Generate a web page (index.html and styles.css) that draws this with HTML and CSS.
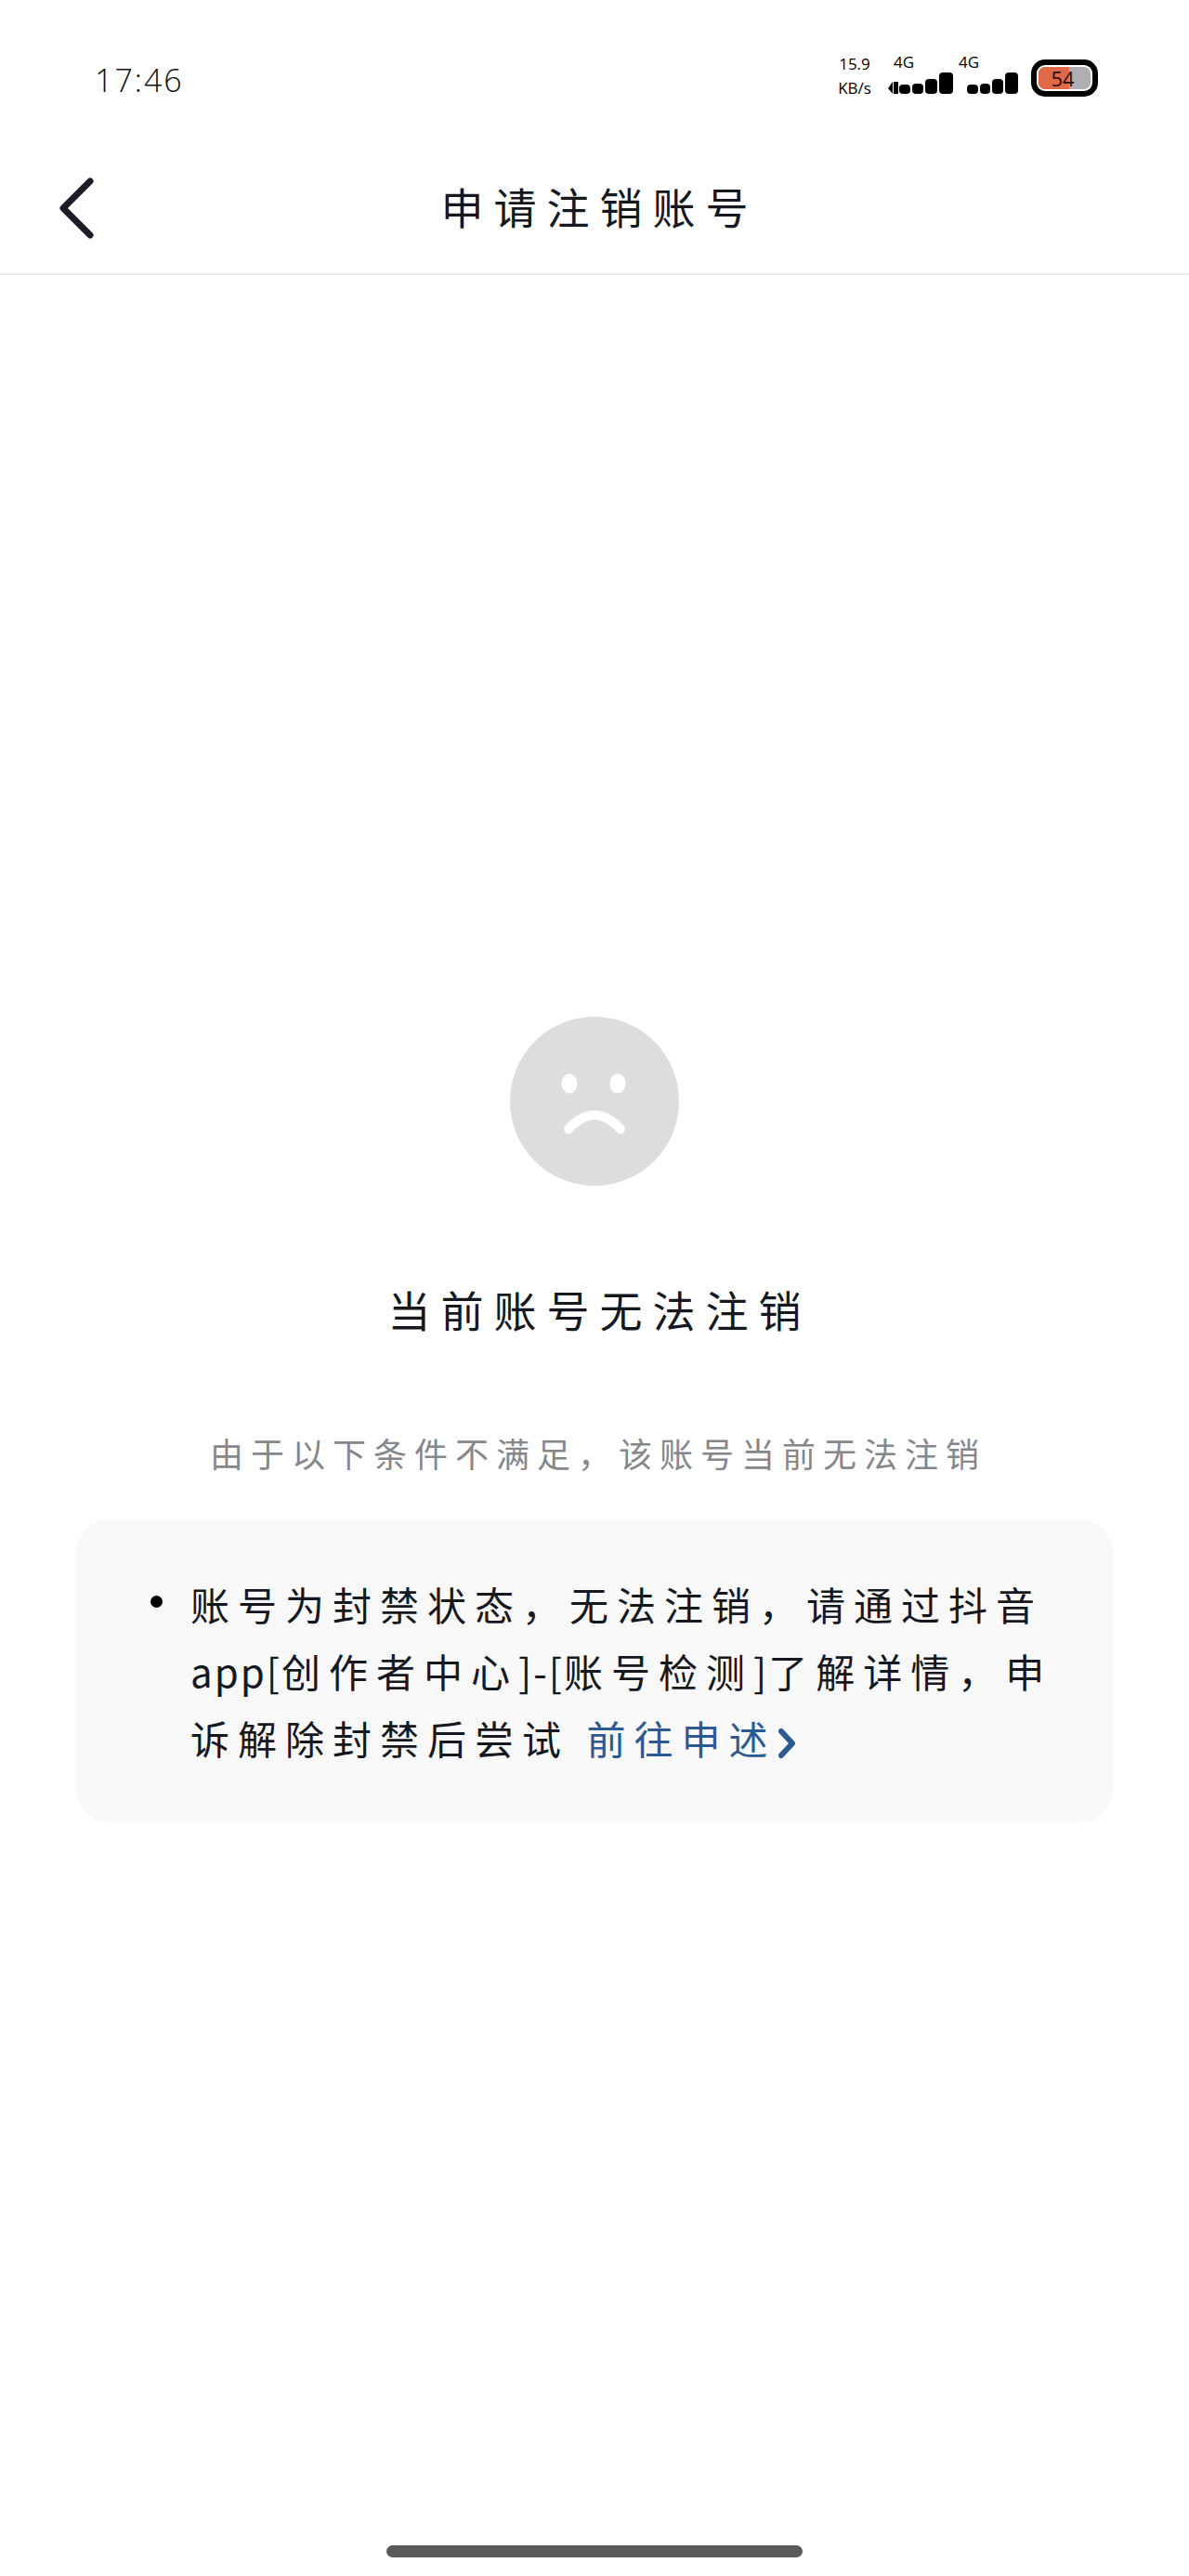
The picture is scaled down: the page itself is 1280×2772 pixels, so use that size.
FILE: index.html
```html
<!DOCTYPE html>
<html lang="zh-CN">
<head>
<meta charset="utf-8">
<title>申请注销账号</title>
<link rel="stylesheet" href="styles.css">
</head>
<body>
<div class="page">
  <header class="status">
    <span class="time">17:46</span>
    <div class="indicators">
      <div class="speed"><span>15.9</span><span>KB/s</span></div>
      <div class="sim sim-first">
        <span class="gen">4G</span>
        <svg class="bars bars-first" viewBox="0 0 72 26" aria-hidden="true">
          <path d="M0 19l5-7v13zM6 12h5v13H6z" fill="#000"/>
          <rect x="12" y="15" width="12" height="10" rx="4" fill="#000"/>
          <rect x="26" y="14" width="12" height="11" rx="4" fill="#000"/>
          <rect x="40" y="9" width="13" height="16" rx="4" fill="#000"/>
          <rect x="55" y="2" width="15" height="23" rx="4" fill="#000"/>
        </svg>
      </div>
      <div class="sim sim-second">
        <span class="gen gen-second">4G</span>
        <svg class="bars bars-second" viewBox="0 0 56 26" aria-hidden="true">
          <rect x="0" y="15" width="12" height="10" rx="4" fill="#000"/>
          <rect x="14" y="14" width="11" height="11" rx="4" fill="#000"/>
          <rect x="27" y="9" width="12" height="16" rx="4" fill="#000"/>
          <rect x="41" y="2" width="14" height="23" rx="4" fill="#000"/>
        </svg>
      </div>
      <div class="battery"><div class="battery-level"><span class="battery-fill"></span><span class="battery-text">54</span></div></div>
    </div>
  </header>

  <nav class="nav">
    <svg class="back" viewBox="0 0 40 66" aria-hidden="true">
      <path d="M35 4L6 33l29 29" fill="none" stroke="#1b1c26" stroke-width="7" stroke-linecap="round" stroke-linejoin="round"/>
    </svg>
    <h1 class="nav-title">申请注销账号</h1>
  </nav>

  <main class="content">
    <svg class="face" viewBox="0 0 182 182" aria-hidden="true">
      <circle cx="91" cy="91" r="91" fill="#dcddde"/>
      <ellipse cx="64" cy="72" rx="8.5" ry="10.5" fill="#fff"/>
      <ellipse cx="116" cy="72" rx="8.5" ry="10.5" fill="#fff"/>
      <path d="M63 121c18-20 38-20 56 0" fill="none" stroke="#fff" stroke-width="10" stroke-linecap="round"/>
    </svg>
    <h2 class="headline">当前账号无法注销</h2>
    <p class="reason">由于以下条件不满足，该账号当前无法注销</p>
    <section class="card">
      <ul class="list">
        <li class="item">账号为封禁状态，无法注销，请通过抖音<span class="latin">app[</span>创作者中心<span class="latin">]-[</span>账号检测<span class="latin">]</span>了解详情，申诉解除封禁后尝试 <a class="link">前往申述<svg class="chevron" viewBox="0 0 20 34" aria-hidden="true"><path d="M4 4l12 13L4 30" fill="none" stroke="#2b5a94" stroke-width="6" stroke-linecap="round" stroke-linejoin="round"/></svg></a></li>
      </ul>
    </section>
  </main>

  <div class="home"><span class="home-bar"></span></div>
</div>
</body>
</html>
```

FILE: styles.css
```css
* { box-sizing: border-box; }
html, body { margin: 0; padding: 0; background: #fff; }
body {
  font-family: "Noto Sans CJK SC", "Noto Sans", sans-serif;
  color: #16181f;
}
.page {
  width: 1280px;
  height: 2772px;
  display: flex;
  flex-direction: column;
  overflow: hidden;
}
.status {
  height: 166px;
  padding: 58px 98px 0 102px;
  display: flex;
  justify-content: space-between;
  align-items: flex-start;
  flex: none;
}
.time {
  font-family: "Open Sans", sans-serif;
  font-weight: 300;
  font-size: 34px;
  line-height: 44px;
  letter-spacing: 2px;
  margin-top: 6px;
  color: #111;
}
.indicators { display: flex; align-items: flex-start; }
.speed {
  display: flex;
  flex-direction: column;
  align-items: center;
  width: 44px;
  font-family: "Open Sans", sans-serif;
  font-weight: 400;
  font-size: 17px;
  line-height: 26px;
  color: #000;
  margin-top: -2px;
  margin-left: -4px;
  margin-right: 4px;
}
.sim { display: flex; flex-direction: column; }
.sim-first { margin-left: 10px; width: 72px; }
.sim-second { margin-left: 13px; width: 56px; }
.gen {
  font-family: "Open Sans", sans-serif;
  font-weight: 400;
  font-size: 17px;
  line-height: 18px;
  margin-left: 6px;
  color: #000;
}
.gen-second { margin-left: -9px; }
.bars { display: block; height: 26px; }
.bars-first { width: 72px; }
.bars-second { width: 56px; }
.battery {
  margin-left: 13px;
  margin-top: 6px;
  width: 72px;
  height: 40px;
  padding: 6px;
  border-radius: 15px;
  background: #000;
}
.battery-level {
  position: relative;
  height: 28px;
  border-radius: 9px;
  background: #fff;
}
.battery-level::before {
  content: "";
  position: absolute;
  inset: 2px;
  border-radius: 7px;
  background: #b0aeb3;
}
.battery-fill {
  position: absolute;
  left: 2px;
  top: 2px;
  bottom: 2px;
  width: 33px;
  border-radius: 7px 0 0 7px;
  background: #e0694a;
}
.battery-text {
  position: absolute;
  left: 0;
  right: 4px;
  top: -2px;
  text-align: center;
  font-family: "Open Sans", sans-serif;
  font-size: 22px;
  line-height: 32px;
  color: #2a0d0d;
}
.nav {
  height: 130px;
  flex: none;
  display: flex;
  align-items: flex-start;
  justify-content: center;
  position: relative;
  border-bottom: 2px solid #e9e9e9;
}
.back {
  position: absolute;
  left: 62px;
  top: 25px;
  width: 40px;
  height: 66px;
}
.nav-title {
  margin: 23px 0 0;
  padding-left: 11px;
  font-weight: 400;
  font-size: 46px;
  line-height: 64px;
  letter-spacing: 11px;
  color: #16181f;
}
.content {
  flex: 1;
  display: flex;
  flex-direction: column;
  align-items: center;
  padding-top: 798px;
}
.face { width: 182px; height: 182px; display: block; flex: none; }
.headline {
  margin: 100px 0 0;
  padding-left: 11px;
  font-weight: 400;
  font-size: 46px;
  line-height: 64px;
  letter-spacing: 11px;
  color: #16181f;
}
.reason {
  margin: 98px 0 0;
  padding-left: 8px;
  font-size: 36px;
  line-height: 50px;
  letter-spacing: 8px;
  color: #85878b;
}
.card {
  width: 1116px;
  height: 326px;
  margin-top: 47px;
  background: #f8f8f9;
  border-radius: 36px;
  padding: 55px 48px 0 123px;
}
.list { margin: 0; padding: 0; list-style: none; }
.item {
  position: relative;
  font-size: 42px;
  line-height: 72px;
  letter-spacing: 9px;
  color: #16181f;
}
.item::before {
  content: "";
  position: absolute;
  left: -43px;
  top: 27px;
  width: 13px;
  height: 13px;
  border-radius: 50%;
  background: #000;
}
.latin { letter-spacing: 2px; }
.link { color: #2b5a94; }
.chevron {
  display: inline-block;
  width: 20px;
  height: 34px;
  vertical-align: -5px;
  margin-left: 2px;
}
.home {
  flex: none;
  height: 33px;
  display: flex;
  justify-content: center;
}
.home-bar {
  display: block;
  width: 448px;
  height: 13px;
  border-radius: 7px;
  background: #5a5a5a;
}
```
